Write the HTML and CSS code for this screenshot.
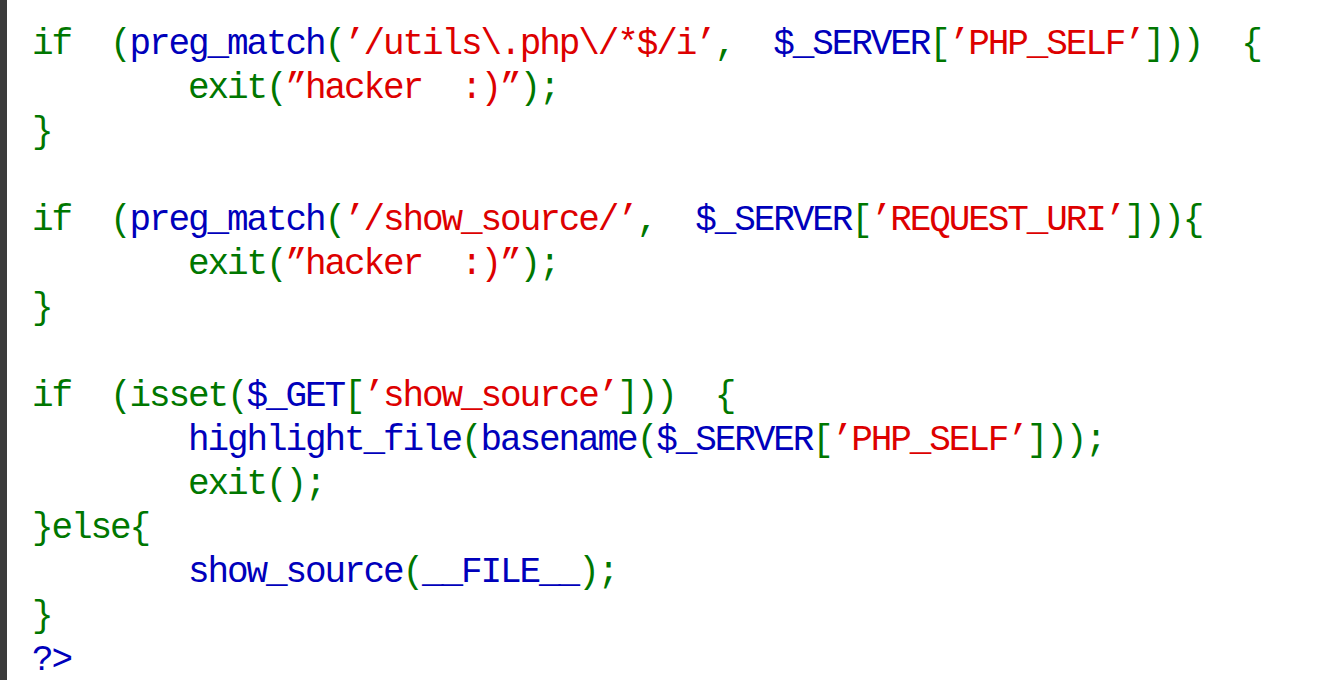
FILE: index.html
```html
<!DOCTYPE html>
<html>
<head>
<meta charset="utf-8">
<link rel="stylesheet" href="styles.css">
</head>
<body>
<div class="page">
  <div class="stripe"></div>
  <pre class="code"><span class="k">if  (</span><span class="d">preg_match</span><span class="k">(</span><span class="s">’/utils\.php\/*$/i’</span><span class="k">,  </span><span class="d">$_SERVER</span><span class="k">[</span><span class="s">’PHP_SELF’</span><span class="k">]))  {</span>
<span class="k">        exit(</span><span class="s">”hacker  :)”</span><span class="k">);</span>
<span class="k">}</span>

<span class="k">if  (</span><span class="d">preg_match</span><span class="k">(</span><span class="s">’/show_source/’</span><span class="k">,  </span><span class="d">$_SERVER</span><span class="k">[</span><span class="s">’REQUEST_URI’</span><span class="k">])){</span>
<span class="k">        exit(</span><span class="s">”hacker  :)”</span><span class="k">);</span>
<span class="k">}</span>

<span class="k">if  (isset(</span><span class="d">$_GET</span><span class="k">[</span><span class="s">’show_source’</span><span class="k">]))  {</span>
<span class="d">        highlight_file</span><span class="k">(</span><span class="d">basename</span><span class="k">(</span><span class="d">$_SERVER</span><span class="k">[</span><span class="s">’PHP_SELF’</span><span class="k">]));</span>
<span class="k">        exit();</span>
<span class="k">}else{</span>
<span class="d">        show_source</span><span class="k">(</span><span class="d">__FILE__</span><span class="k">);</span>
<span class="k">}</span>
<span class="d">?&gt;</span></pre>
</div>
</body>
</html>
```
FILE: styles.css
```css
html, body {
  margin: 0;
  padding: 0;
  background: #ffffff;
}

.page {
  display: flex;
  height: 680px;
  overflow: hidden;
}

.stripe {
  width: 7px;
  flex: none;
  background: #3b3b3b;
}

.code {
  margin: 0;
  padding: 23px 0 0 25px;
  font-family: "Liberation Mono", monospace;
  font-size: 36px;
  letter-spacing: -2.1px;
  line-height: 44px;
  white-space: pre;
}

.k { color: #007700; }
.d { color: #0000bb; }
.s { color: #dd0000; }
```
